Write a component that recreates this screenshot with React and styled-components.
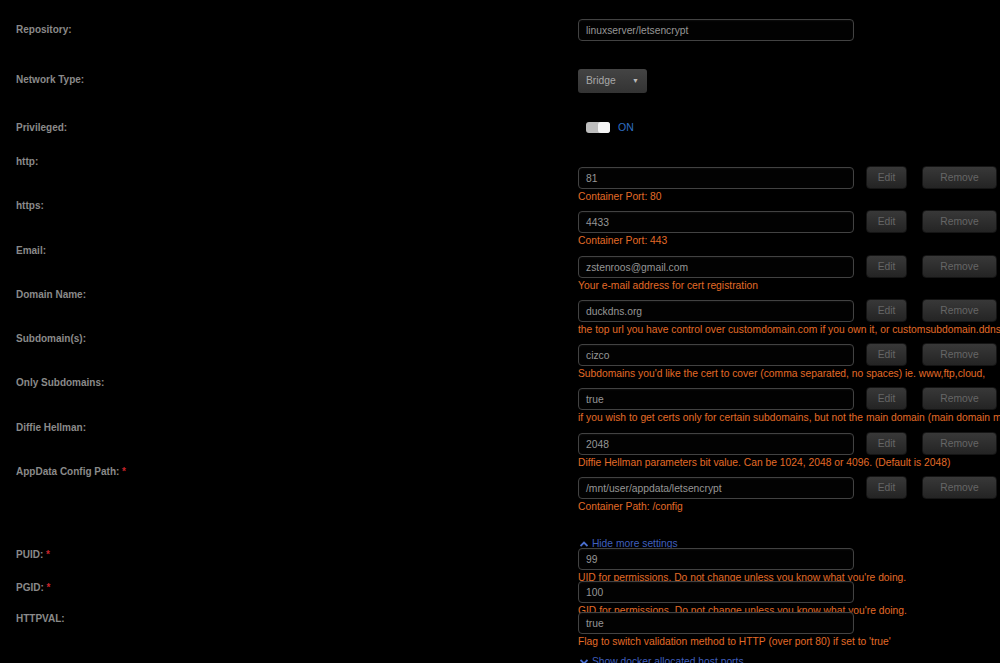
import React from "react";
import styled, { createGlobalStyle } from "styled-components";

const GlobalStyle = createGlobalStyle`
	html, body {
		margin: 0;
		padding: 0;
		background: #000;
		overflow: hidden;
	}
	body {
		font-family: "Liberation Sans", Arial, sans-serif;
	}
`;

const rows = [
	{ label: "Repository:", h: 50, lt: 14, ft: 9, kind: "text", value: "linuxserver/letsencrypt" },
	{ label: "Network Type:", h: 50, lt: 14, ft: 9, kind: "select", value: "Bridge" },
	{ label: "Privileged:", h: 40, lt: 12, ft: 11, kind: "toggle" },
	{ label: "http:", h: 44, value: "81", desc: "Container Port: 80", buttons: true },
	{ label: "https:", h: 45, value: "4433", desc: "Container Port: 443", buttons: true },
	{ label: "Email:", h: 44, value: "zstenroos@gmail.com", desc: "Your e-mail address for cert registration", buttons: true },
	{ label: "Domain Name:", h: 44, value: "duckdns.org", desc: "the top url you have control over customdomain.com if you own it, or customsubdomain.ddnsprovider.com if dynamic dns", buttons: true },
	{ label: "Subdomain(s):", h: 44, value: "cizco", desc: "Subdomains you'd like the cert to cover (comma separated, no spaces) ie. www,ftp,cloud,", buttons: true },
	{ label: "Only Subdomains:", h: 45, value: "true", desc: "if you wish to get certs only for certain subdomains, but not the main domain (main domain may be hosted on another machine)", buttons: true },
	{ label: "Diffie Hellman:", h: 44, value: "2048", desc: "Diffie Hellman parameters bit value. Can be 1024, 2048 or 4096. (Default is 2048)", buttons: true },
	{ label: "AppData Config Path:", required: true, h: 77, value: "/mnt/user/appdata/letsencrypt", desc: "Container Path: /config", buttons: true },
	{ link: "Hide more settings", h: 11, lt: 0, ft: 0, up: true },
	{ label: "PUID:", required: true, h: 33, lt: 1, ft: 0, value: "99", desc: "UID for permissions. Do not change unless you know what you're doing." },
	{ label: "PGID:", required: true, h: 31, lt: 1, ft: 0, value: "100", desc: "GID for permissions. Do not change unless you know what you're doing." },
	{ label: "HTTPVAL:", h: 43, lt: 1, ft: 0, value: "true", desc: "Flag to switch validation method to HTTP (over port 80) if set to 'true'" },
	{ link: "Show docker allocated host ports", h: 30, lt: 0, ft: 0 },
];

const Caret = ({ up }) => (
	<svg width="8" height="6" viewBox="0 0 8 6">
		<path d={up ? "M0.5 5 L4 1.5 L7.5 5" : "M0.5 1 L4 4.5 L7.5 1"} fill="none" stroke="#4a6fd0" strokeWidth="1.8" />
	</svg>
);

const App = () => {
	return (
		<>
			<GlobalStyle />
			<Page>
				{rows.map((r, i) => (
					<Row key={i} $h={r.h}>
						<Label $top={r.lt ?? 6}>
							{r.label}
							{r.required && <Star> *</Star>}
						</Label>
						<Field $top={r.ft ?? 16}>
							{r.link ? (
								<MoreLink>
									<Caret up={r.up} /> {r.link}
								</MoreLink>
							) : r.kind === "select" ? (
								<Select>
									{r.value}
									<Arrow>▼</Arrow>
								</Select>
							) : r.kind === "toggle" ? (
								<ToggleWrap>
									<Track>
										<Knob />
									</Track>
									<OnText>ON</OnText>
								</ToggleWrap>
							) : (
								<>
									<InputLine>
										<TextBox>{r.value}</TextBox>
										{r.buttons && (
											<>
												<Btn $w={41}>Edit</Btn>
												<Btn $w={75} $ml={15}>Remove</Btn>
											</>
										)}
									</InputLine>
									{r.desc && <Desc>{r.desc}</Desc>}
								</>
							)}
						</Field>
					</Row>
				))}
			</Page>
		</>
	);
};

const Page = styled.div`
	padding: 10px 0 0 16px;
	display: flex;
	flex-direction: column;
`;

const Row = styled.div`
	display: grid;
	grid-template-columns: 562px 1fr;
	height: ${p => p.$h}px;
	white-space: nowrap;
`;

const Label = styled.div`
	padding-top: ${p => p.$top}px;
	font-size: 10px;
	line-height: 12px;
	font-weight: bold;
	color: #8a8a8a;
`;

const Star = styled.span`
	color: #c8242b;
`;

const Field = styled.div`
	padding-top: ${p => p.$top}px;
	min-width: 0;
`;

const InputLine = styled.div`
	position: relative;
	display: flex;
	align-items: center;
`;

const TextBox = styled.div`
	display: inline-block;
	box-sizing: border-box;
	width: 276px;
	height: 22px;
	padding: 1px 7px 0;
	background: #020202;
	border: 1px solid #424242;
	border-radius: 4px;
	box-shadow: inset 0 1px 2px rgba(255, 255, 255, 0.05);
	color: #969696;
	font-size: 10.3px;
	line-height: 19px;
`;

const Btn = styled.div`
	box-sizing: border-box;
	width: ${p => p.$w}px;
	height: 23px;
	margin-left: ${p => p.$ml || 12}px;
	border-radius: 4px;
	border: 1px solid #151515;
	background: linear-gradient(#383838, #242424);
	color: #666;
	font-size: 10.3px;
	line-height: 21px;
	text-align: center;
`;

const Desc = styled.div`
	color: #e36b27;
	font-size: 10.3px;
	line-height: 14px;
	margin-top: 1px;
`;

const Select = styled.div`
	box-sizing: border-box;
	width: 69px;
	height: 24px;
	padding: 0 8px;
	border-radius: 3px;
	background: linear-gradient(#444, #333);
	color: #a8a8a8;
	font-size: 10.3px;
	line-height: 24px;
	display: flex;
	justify-content: space-between;
`;

const Arrow = styled.span`
	font-size: 7px;
	color: #bbb;
`;

const ToggleWrap = styled.div`
	display: flex;
	align-items: center;
	padding-left: 8px;
	height: 12px;
`;

const Track = styled.div`
	box-sizing: border-box;
	width: 24px;
	height: 11px;
	border-radius: 3px;
	background: #bdbdbd;
	display: flex;
	justify-content: flex-end;
`;

const Knob = styled.div`
	width: 12px;
	height: 11px;
	border-radius: 3px;
	background: #f4f4f4;
`;

const OnText = styled.span`
	margin-left: 8px;
	color: #2f6fc4;
	font-size: 10.5px;
	line-height: 12px;
`;

const MoreLink = styled.div`
	color: #3f5fbf;
	font-size: 10.3px;
	line-height: 14px;
	padding-left: 2px;
	svg {
		margin-right: 1px;
	}
`;

export default App;
